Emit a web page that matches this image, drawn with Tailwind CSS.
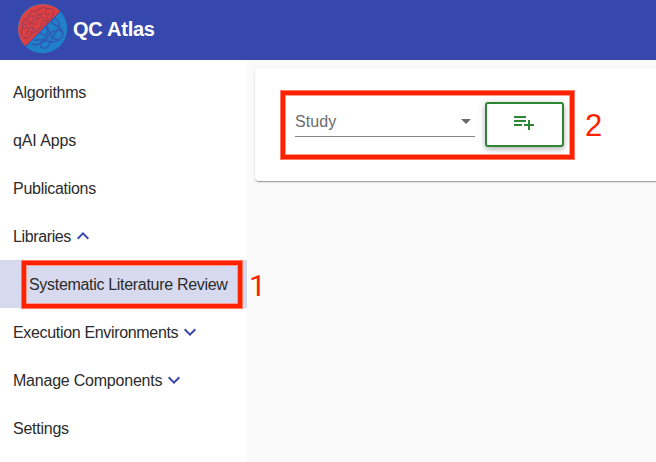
<!DOCTYPE html>
<html lang="en">
<head>
<meta charset="utf-8">
<title>QC Atlas</title>
<script src="https://cdn.jsdelivr.net/npm/@tailwindcss/browser@4"></script>
</head>
<body class="relative flex h-[462px] w-[656px] flex-col overflow-hidden bg-[#fafafa] font-['Liberation_Sans',Arial,sans-serif] text-base text-[#2b2b2b]">
  <header class="flex h-[60px] shrink-0 items-center bg-[#3748ac] pb-[4px] pl-[17px]">
    <svg class="size-[51px] shrink-0" viewBox="0 0 51 51" fill="none">
      <circle cx="25.5" cy="25.5" r="24.7" fill="#2080c8"/>
      <path d="M8.4 43.4A24.7 24.7 0 0 1 43.4 8.4Z" fill="#dc4040"/>
      <path d="M7.8 44L44 7.8" stroke="#3748ac" stroke-width="1"/>
      <g stroke="#8a3a62" stroke-width="1" stroke-linecap="round" stroke-linejoin="round">
        <path d="M8 35C4 33 3 28 6 25C4 20 7 16 11 15C12 9 17 7 20 8C23 4 28 4 30 6C34 4 38 8 36 12C35 16 31 17 30 20C26 21 26 25 22 25C21 29 17 28 15 31C13 34 10 36 8 35Z"/>
        <path d="M7 26C10 23 12 25 11 28S8 30 10 32M9 18C13 17 14 20 12 22M14 13C18 13 19 16 16 18S15 22 19 21M20 10C21 13 25 13 25 10M22 16C24 13 28 14 27 17S23 19 24 22M29 8C27 11 30 13 33 11M12 25C15 23 18 24 18 27M30 14C32 16 31 18 29 18M14 30L16 26M19 12L21 16L19 18M7 22L10 21"/>
      </g>
      <g stroke="#2f5ab4" stroke-width="1.5">
        <path d="M17 38C23 34 29 39 36 39C45 38 49 30 43 25C39 21 34 22 35 17C38 13 43 18 42 24C40 30 36 31 34 37C32 44 28 47 24 44C22 39 27 36 31 32C36 27 42 26 46 29"/>
        <path d="M27 24C31 25 32 29 29 31C26 33 23 31 23 28M30 23C32 30 36 38 43 37M14 41C21 44 27 39 32 34"/>
      </g>
    </svg>
    <h1 class="ml-[5px] mt-[2px] text-[20px] leading-6 font-bold tracking-[-0.25px] text-white">QC Atlas</h1>
  </header>

  <div class="flex grow">
    <nav class="flex w-[247px] shrink-0 flex-col bg-white pt-2">
      <a class="flex h-12 items-center pl-[13px] pt-[2px] tracking-[-0.25px]">Algorithms</a>
      <a class="flex h-12 items-center pl-[13px] pt-[2px] tracking-[-0.1px]">qAI Apps</a>
      <a class="flex h-12 items-center pl-[13px] pt-[2px] tracking-[-0.28px]">Publications</a>
      <a class="flex h-12 items-center pl-[13px] pt-[2px] tracking-[-0.38px]"><span>Libraries</span>
        <svg class="-mt-[2px] ml-[6px] h-[8px] w-[12px]" viewBox="0 0 12 8" fill="none" stroke="#3949ab" stroke-width="2"><path d="M.7 6.7L6 1.4L11.3 6.7"/></svg></a>
      <a class="flex h-12 items-center bg-[#d7d9ee] pl-[29px] pt-[2px] tracking-[-0.31px]">Systematic Literature Review</a>
      <a class="flex h-12 items-center pl-[13px] pt-[2px] tracking-[-0.33px]"><span>Execution Environments</span>
        <svg class="-mt-[2px] ml-[6px] h-[8px] w-[12px]" viewBox="0 0 12 8" fill="none" stroke="#3949ab" stroke-width="2"><path d="M.7 1.3L6 6.6L11.3 1.3"/></svg></a>
      <a class="flex h-12 items-center pl-[13px] pt-[2px] tracking-[-0.22px]"><span>Manage Components</span>
        <svg class="-mt-[2px] ml-[6px] h-[8px] w-[12px]" viewBox="0 0 12 8" fill="none" stroke="#3949ab" stroke-width="2"><path d="M.7 1.3L6 6.6L11.3 1.3"/></svg></a>
      <a class="flex h-12 items-center pl-[13px] pt-[2px] tracking-[-0.25px]">Settings</a>
    </nav>

    <main class="grow pt-2 pl-2">
      <section class="flex h-[113px] w-[420px] items-start rounded-[4px] bg-white pl-[40px] pt-[34px] shadow-[0_2px_1px_-1px_rgba(0,0,0,0.2),0_1px_1px_0_rgba(0,0,0,0.14),0_1px_3px_0_rgba(0,0,0,0.12)]">
        <div class="flex h-[35px] w-[180px] items-center justify-between border-b border-[#868686] pr-[4px] text-[#6b6b6b]">
          <span class="mt-[5px] tracking-[0.1px]">Study</span>
          <svg class="mt-[5px] h-[5px] w-[10px]" viewBox="0 0 10 5"><path d="M0 0L5 5L10 0Z" fill="#6b6b6b"/></svg>
        </div>
        <button class="ml-[10px] flex h-[45px] w-[79px] items-start justify-center rounded-[3px] border-2 border-[#2e8534] bg-white pt-[6px] pr-[1px] shadow-[0_3px_5px_rgba(0,0,0,0.2),0_0_8px_rgba(0,0,0,0.12)]">
          <svg class="size-6" viewBox="0 0 24 24" fill="#2e8534"><path d="M14 10H2v2h12v-2zm0-4H2v2h12V6zm4 8v-4h-2v4h-4v2h4v4h2v-4h4v-2h-4zM2 16h8v-2H2v2z"/></svg>
        </button>
      </section>
    </main>
  </div>

  <!-- Step annotations laid over the interface -->
  <div class="absolute top-[260px] left-[21px] h-[49px] w-[222px] border-[5px] border-[#ff2200] shadow-[inset_0_0_0_1px_#ff9a90] outline-1 -outline-offset-1 outline-[#ff7865]"></div>
  <span class="absolute top-[268px] left-[249px] font-[Roboto,sans-serif] text-[30px] leading-[36px] text-[#ff2200]">1</span>
  <div class="absolute top-[90px] left-[280px] h-[70px] w-[295px] border-[5px] border-[#ff2200] shadow-[inset_0_0_0_1px_#ff9a90] outline-1 -outline-offset-1 outline-[#ff7865]"></div>
  <span class="absolute top-[108px] left-[585px] text-[31px] leading-[36px] text-[#ff2200]">2</span>
</body>
</html>
